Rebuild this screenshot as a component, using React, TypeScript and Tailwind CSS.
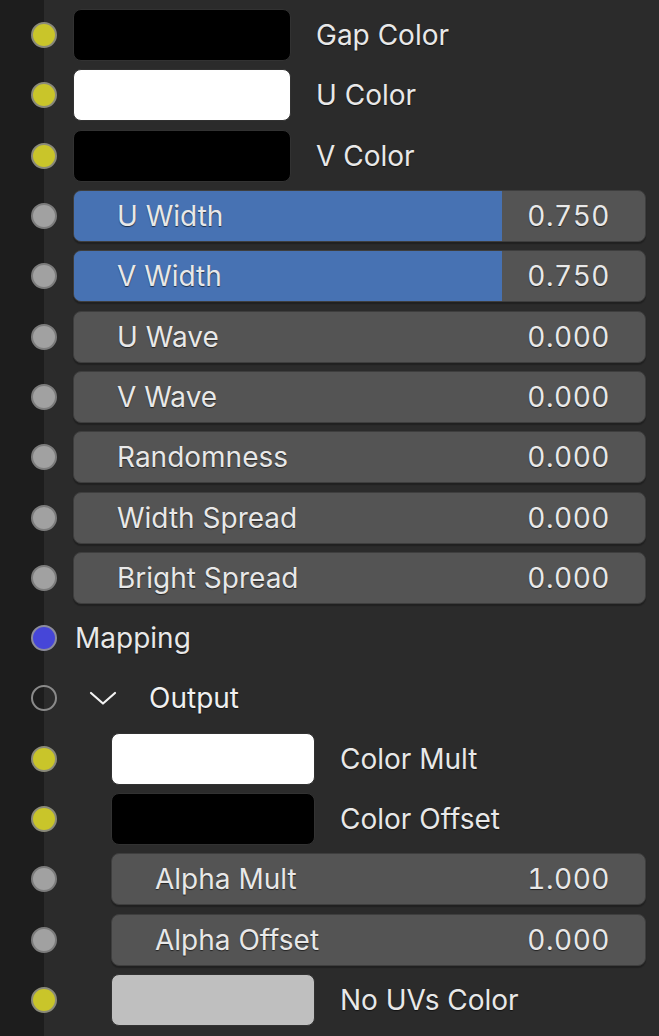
import React from "react"

type Socket = "yellow" | "grey" | "blue" | "hollow"

type Row =
  | { kind: "color"; socket: Socket; label: string; swatch: string; indent?: boolean }
  | { kind: "value"; socket: Socket; label: string; value: string; fill?: number; indent?: boolean }
  | { kind: "label"; socket: Socket; label: string }
  | { kind: "panel"; socket: Socket; label: string }

const rows: Row[] = [
  { kind: "color", socket: "yellow", label: "Gap Color", swatch: "bg-black" },
  { kind: "color", socket: "yellow", label: "U Color", swatch: "bg-white" },
  { kind: "color", socket: "yellow", label: "V Color", swatch: "bg-black" },
  { kind: "value", socket: "grey", label: "U Width", value: "0.750", fill: 0.75 },
  { kind: "value", socket: "grey", label: "V Width", value: "0.750", fill: 0.75 },
  { kind: "value", socket: "grey", label: "U Wave", value: "0.000" },
  { kind: "value", socket: "grey", label: "V Wave", value: "0.000" },
  { kind: "value", socket: "grey", label: "Randomness", value: "0.000" },
  { kind: "value", socket: "grey", label: "Width Spread", value: "0.000" },
  { kind: "value", socket: "grey", label: "Bright Spread", value: "0.000" },
  { kind: "label", socket: "blue", label: "Mapping" },
  { kind: "panel", socket: "hollow", label: "Output" },
  { kind: "color", socket: "yellow", label: "Color Mult", swatch: "bg-white", indent: true },
  { kind: "color", socket: "yellow", label: "Color Offset", swatch: "bg-black", indent: true },
  { kind: "value", socket: "grey", label: "Alpha Mult", value: "1.000", indent: true },
  { kind: "value", socket: "grey", label: "Alpha Offset", value: "0.000", indent: true },
  { kind: "color", socket: "yellow", label: "No UVs Color", swatch: "bg-[#bfbfbf]", indent: true },
]

function SocketDot({ type }: { type: Socket }) {
  const cls =
    type === "yellow"
      ? "bg-[#c9c52a] border-[#8a8a7a]"
      : type === "grey"
        ? "bg-[#a1a1a1] border-[#7c7c7c]"
        : type === "blue"
          ? "bg-[#4646d8] border-[#8c8c9c]"
          : "bg-transparent border-[#8a8a8a]"
  return <div className={`-ml-[13px] h-[26px] w-[26px] shrink-0 rounded-full border-2 ${cls}`} />
}

const textShadow = "[text-shadow:0_1px_1px_rgba(0,0,0,0.6)]"

function RowView({ row }: { row: Row }) {
  const indent = "indent" in row && row.indent
  return (
    <div className="flex h-[60.3px] items-center">
      <SocketDot type={row.socket} />
      <div className={`flex flex-1 items-center pr-[13px] ${indent ? "pl-[54px]" : "pl-[16px]"}`}>
        {row.kind === "color" && (
          <>
            <div
              className={`h-[52px] ${indent ? "w-[204px]" : "w-[218px]"} shrink-0 rounded-[8px] border border-[#323232] ${row.swatch}`}
            />
            <span className={`ml-[25px] text-[28px] text-[#e8e8e8] ${textShadow}`}>{row.label}</span>
          </>
        )}
        {row.kind === "value" && (
          <div className="relative flex h-[52px] flex-1 items-center overflow-hidden rounded-[8px] border border-[#3e3e3e] bg-[#545454] shadow-[0_2px_1px_rgba(0,0,0,0.25)]">
            {row.fill !== undefined && (
              <div className="absolute inset-y-0 left-0 bg-[#4772b3]" style={{ width: `${row.fill * 100}%` }} />
            )}
            <div className="relative flex flex-1 items-center justify-between pl-[43px] pr-[35px]">
              <span className={`text-[28px] text-[#e8e8e8] ${textShadow}`}>{row.label}</span>
              <span className={`text-[28px] tabular-nums tracking-[0.5px] text-[#e8e8e8] ${textShadow}`}>{row.value}</span>
            </div>
          </div>
        )}
        {row.kind === "label" && (
          <span className={`ml-[2px] text-[28px] text-[#e8e8e8] ${textShadow}`}>{row.label}</span>
        )}
        {row.kind === "panel" && (
          <div className="flex items-center">
            <svg width="30" height="16" viewBox="0 0 30 16" className="ml-[15px]">
              <path d="M3 3 L15 13.5 L27 3" fill="none" stroke="#f2f2f2" strokeWidth="2.2" strokeLinecap="round" strokeLinejoin="round" />
            </svg>
            <span className={`ml-[31px] text-[28px] text-[#f0f0f0] ${textShadow}`}>{row.label}</span>
          </div>
        )}
      </div>
    </div>
  )
}

export default function App() {
  return (
    <div className="flex h-[1036px] w-[659px] overflow-hidden bg-[#2b2b2b] font-['Inter','Noto_Sans',sans-serif]">
      <div className="w-[44px] shrink-0 bg-[#1d1d1d]" />
      <div className="flex-1 pt-[5px]">
        {rows.map((row) => (
          <RowView key={row.label} row={row} />
        ))}
      </div>
    </div>
  )
}
